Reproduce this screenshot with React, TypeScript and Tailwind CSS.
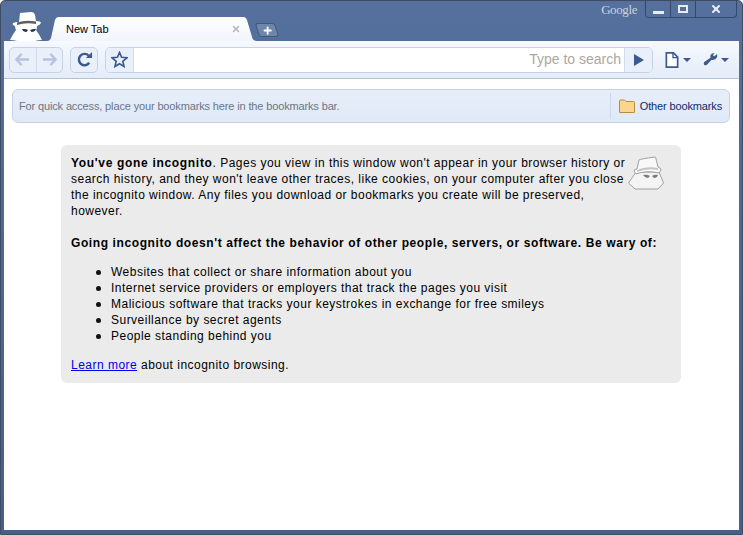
import { Plus, X } from 'lucide-react'

const Spy = ({ className }: { className: string }) => (
    <svg viewBox="0 0 32 29" className={className}>
        <path
            d="M10 1 L21 0 Q24 0 25 3 L26 9 Q31 9 31 11 Q30 13 27 14 Q27 17 26 18 Q29 22 32 28 Q28 28 25 29 L7 29 Q4 28 0 28 Q3 22 6 18 Q5 16 5 14 Q2 13 3 11 Q5 10 9 10 Z"
            fill="#ffffff"
        />
        <path d="M7 10.5 Q16 7.5 26 9.5 L26 12 Q16 10 7 13 Z" fill="#5d5f66" />
        <path d="M12 17 Q16 16.5 18 18 L16.5 20 Q13 20 12 17 Z" fill="#2c3240" />
        <path d="M20 18 Q23 16.5 26 17 Q25 20 21.5 20 Z" fill="#2c3240" />
    </svg>
)

const SpyOutline = ({ className }: { className: string }) => (
    <svg viewBox="0 0 36 34" className={className}>
        <path
            d="M8 16 Q4 22 .5 27 L7 33 L30 33 L35.5 27 Q33 21 31 16 Z"
            fill="#f4f4f4"
            stroke="#a0a0a0"
            strokeLinejoin="round"
        />
        <path
            d="M11 4 Q12 3 27 1 Q28 1 28 3 L30 11 Q33 12 33 14 L31 17 Q18 14 8 18 L6 15 Q6 13 9 13 Z"
            fill="#f8f8f8"
            stroke="#a0a0a0"
            strokeLinejoin="round"
        />
        <path d="M9 14 Q18 10 30 12 L30 14 Q18 12 9 16 Z" fill="#c4c4c4" />
        <path d="M15 19 Q19 18 22 20 L20 22 Q17 22 15 19 Z" fill="#7a7a7a" />
        <path d="M24 20 Q27 18 30 19 Q29 22 26 22 Z" fill="#7a7a7a" />
    </svg>
)

const Back = ({ flip }: { flip?: boolean }) => (
    <svg viewBox="0 0 16 14" className={`w-[15px] h-[13px] ${flip ? 'scale-x-[-1]' : ''}`}>
        <path d="M7 1 L1.5 7 L7 13 M2 7 H15" fill="none" stroke="#b5c5e0" strokeWidth="2.6" />
    </svg>
)

const Reload = () => (
    <svg viewBox="0 0 18 18" className="w-[17px] h-[17px]">
        <path d="M14 12.5 A6 6 0 1 1 13.5 5" fill="none" stroke="#3c5a8f" strokeWidth="2.6" />
        <path d="M10.5 7.5 H17 V1 Z" fill="#3c5a8f" />
    </svg>
)

const Star = () => (
    <svg viewBox="0 0 18 18" className="w-[17px] h-[17px]">
        <path
            d="M9 1.5 L11.2 6.7 L16.8 7.2 L12.5 10.9 L13.8 16.4 L9 13.5 L4.2 16.4 L5.5 10.9 L1.2 7.2 L6.8 6.7 Z"
            fill="none"
            stroke="#3c5a8f"
            strokeWidth="1.7"
        />
    </svg>
)

const Caret = () => <div className="w-0 h-0 border-x-[4px] border-x-transparent border-t-[4px] border-t-[#3c5a8f]" />

const Page = () => (
    <svg viewBox="0 0 14 17" className="w-[14px] h-[16px]">
        <path d="M1 1 H8.5 L13 5.5 V16 H1 Z" fill="#ffffff" stroke="#3c5a8f" strokeWidth="1.8" />
        <path d="M8 1 V6 H13" fill="none" stroke="#3c5a8f" strokeWidth="1.4" />
    </svg>
)

const Wrench = () => (
    <svg viewBox="0 0 18 16" className="w-[15px] h-[15px]">
        <path
            d="M17 1.5 L13.5 4 L11.8 2.8 L14 0.5 Q10 0 9 3 Q8.6 5 9 6 L1.5 11 Q0.2 13 1.5 14.5 Q3.5 15.5 5 14 L10 8.5 Q15 9 17 5 Z"
            fill="#3c5a8f"
        />
    </svg>
)

const Folder = () => (
    <svg viewBox="0 0 16 14" className="w-[16px] h-[14px]">
        <path d="M.5 13 V2 Q.5 1 1.5 1 H5.5 L7 2.5 H14.5 Q15.5 2.5 15.5 3.5 V13 Q15.5 13.5 15 13.5 H1 Q.5 13.5 .5 13 Z" fill="#fbd58d" stroke="#b58b3f" />
    </svg>
)

const items = [
    'Websites that collect or share information about you',
    'Internet service providers or employers that track the pages you visit',
    'Malicious software that tracks your keystrokes in exchange for free smileys',
    'Surveillance by secret agents',
    'People standing behind you'
]

const App = () => (
    <div className="w-[743px] h-[535px] overflow-hidden flex flex-col px-[3px] pb-[4px] rounded-t-[5px] bg-gradient-to-b from-[#55709c] via-[#4d6791] to-[#47608a] border border-[#3f4c63] font-['Liberation_Sans',Arial,sans-serif]">
        <div className="h-[40px] shrink-0 flex">
            <div className="w-[43px] flex items-end justify-end pr-[5px]">
                <Spy className="w-[32px] h-[29px]" />
            </div>
            <div className="relative w-[210px] h-[24px] mt-[16px] flex items-center text-[11px] text-black">
                <svg viewBox="0 0 210 24" className="absolute inset-0 w-[210px] h-[24px]">
                    <defs>
                        <linearGradient id="tab" x1="0" y1="0" x2="0" y2="1">
                            <stop offset="0" stopColor="#ffffff" />
                            <stop offset="1" stopColor="#f1f5fc" />
                        </linearGradient>
                    </defs>
                    <path d="M0 24 Q3 24 4 21 L8 3 Q9 0 12 0 L196 0 Q199 0 200 3 L205 20 Q206 24 210 24 Z" fill="url(#tab)" />
                </svg>
                <span className="relative ml-[19px]">New Tab</span>
                <X className="relative ml-auto mr-[16px] w-[10px] h-[10px] text-[#b0b4bb]" strokeWidth={3.5} />
            </div>
            <div className="w-[20px] h-[14px] mt-[22px] rounded-[3px] skew-x-[18deg] bg-[#6f86ab] border border-[#41587f] flex items-center justify-center">
                <Plus className="w-[11px] h-[11px] text-white -skew-x-[18deg]" strokeWidth={4} />
            </div>
            <div className="ml-auto flex items-start">
                <span className="mt-[1px] mr-[8px] text-[13px] leading-[15px] tracking-[-0.4px] text-[#c9d2e0] font-['Liberation_Serif',serif]">Google</span>
                <div className="flex h-[17px] border border-t-0 border-[#34486b] rounded-b-[4px] text-[#e8edf5]">
                    <div className="w-[25px] flex items-end justify-center pb-[3px] border-r border-[#34486b]"><div className="w-[11px] h-[3px] bg-[#e8edf5]" /></div>
                    <div className="w-[25px] flex items-center justify-center border-r border-[#34486b]"><div className="w-[10px] h-[8px] border-2 border-[#e8edf5]" /></div>
                    <div className="w-[40px] flex items-center justify-center"><X className="w-[12px] h-[12px]" strokeWidth={4} /></div>
                </div>
                <div className="w-[2px]" />
            </div>
        </div>
        <div className="flex-1 flex flex-col bg-white min-h-0">
            <div className="h-[38px] shrink-0 flex items-center pl-[5px] pr-[10px] bg-gradient-to-b from-[#f6f9fe] to-[#e4ecf8] border-b border-[#b4c0d6]">
                <div className="flex h-[26px] w-[54px] rounded-[5px] border border-[#c5d2e8] bg-[#eaf0fa]">
                    <div className="flex-1 flex items-center justify-center border-r border-[#d2dcee]"><Back /></div>
                    <div className="flex-1 flex items-center justify-center"><Back flip /></div>
                </div>
                <div className="flex h-[26px] w-[28px] ml-[7px] items-center justify-center rounded-[5px] border border-[#c5d2e8] bg-[#eaf0fa]"><Reload /></div>
                <div className="flex flex-1 h-[26px] ml-[7px] rounded-[5px] border border-[#c5d2e8] bg-white overflow-hidden">
                    <div className="w-[28px] flex items-center justify-center border-r border-[#d2dcee] bg-[#eaf0fa]"><Star /></div>
                    <div className="flex-1 flex items-center justify-end pr-[3px] text-[14px] text-[#aaa89f]">Type to search</div>
                    <div className="w-[28px] flex items-center justify-center border-l border-[#d2dcee] bg-[#eaf0fa]">
                        <div className="w-0 h-0 border-y-[6px] border-y-transparent border-l-[10px] border-l-[#3c5a8f]" />
                    </div>
                </div>
                <div className="flex items-center gap-[4px] ml-[12px]"><Page /><Caret /></div>
                <div className="flex items-center gap-[3px] ml-[12px]"><Wrench /><Caret /></div>
            </div>
            <div className="flex-1 bg-white px-2 pt-[10px] min-h-0">
                <div className="w-[718px] h-[34px] flex items-center rounded-[6px] border border-[#c5d2e8] bg-gradient-to-b from-[#e6eef9] to-[#e0e9f6] text-[11px] tracking-[-0.14px]">
                    <span className="flex-1 pl-[6px] text-[#6b7585]">For quick access, place your bookmarks here in the bookmarks bar.</span>
                    <div className="h-[26px] flex items-center gap-[5px] pl-[8px] pr-[7px] border-l border-[#cdd8ea] text-[#0f2a6b]">
                        <Folder />
                        <span>Other bookmarks</span>
                    </div>
                </div>
                <div className="relative w-[620px] h-[238px] mt-[22px] ml-[49px] rounded-[6px] bg-[#ebebeb] pt-[10px] px-[10px] text-[12px] leading-[16px] text-black tracking-[0.48px]">
                    <SpyOutline className="absolute top-[11px] right-[17px] w-[36px] h-[34px]" />
                    <p className="w-[560px]">
                        <b className="tracking-[0.68px]">You've gone incognito</b>. Pages you view in this window won't appear in your browser history or search history, and they won't leave other traces, like cookies, on your computer after you close the incognito window. Any files you download or bookmarks you create will be preserved, however.
                    </p>
                    <p className="mt-[16px] font-bold tracking-[0.6px]">Going incognito doesn't affect the behavior of other people, servers, or software. Be wary of:</p>
                    <ul className="mt-[13px] pl-[25px]">
                        {items.map((item) => (
                            <li key={item} className="flex items-center gap-[10px]">
                                <span className="w-[5px] h-[5px] rounded-full bg-[#111111]" />
                                {item}
                            </li>
                        ))}
                    </ul>
                    <p className="mt-[13px]">
                        <a href="#" className="text-[#0000ee] underline">Learn more</a> about incognito browsing.
                    </p>
                </div>
            </div>
        </div>
    </div>
)

export default App
